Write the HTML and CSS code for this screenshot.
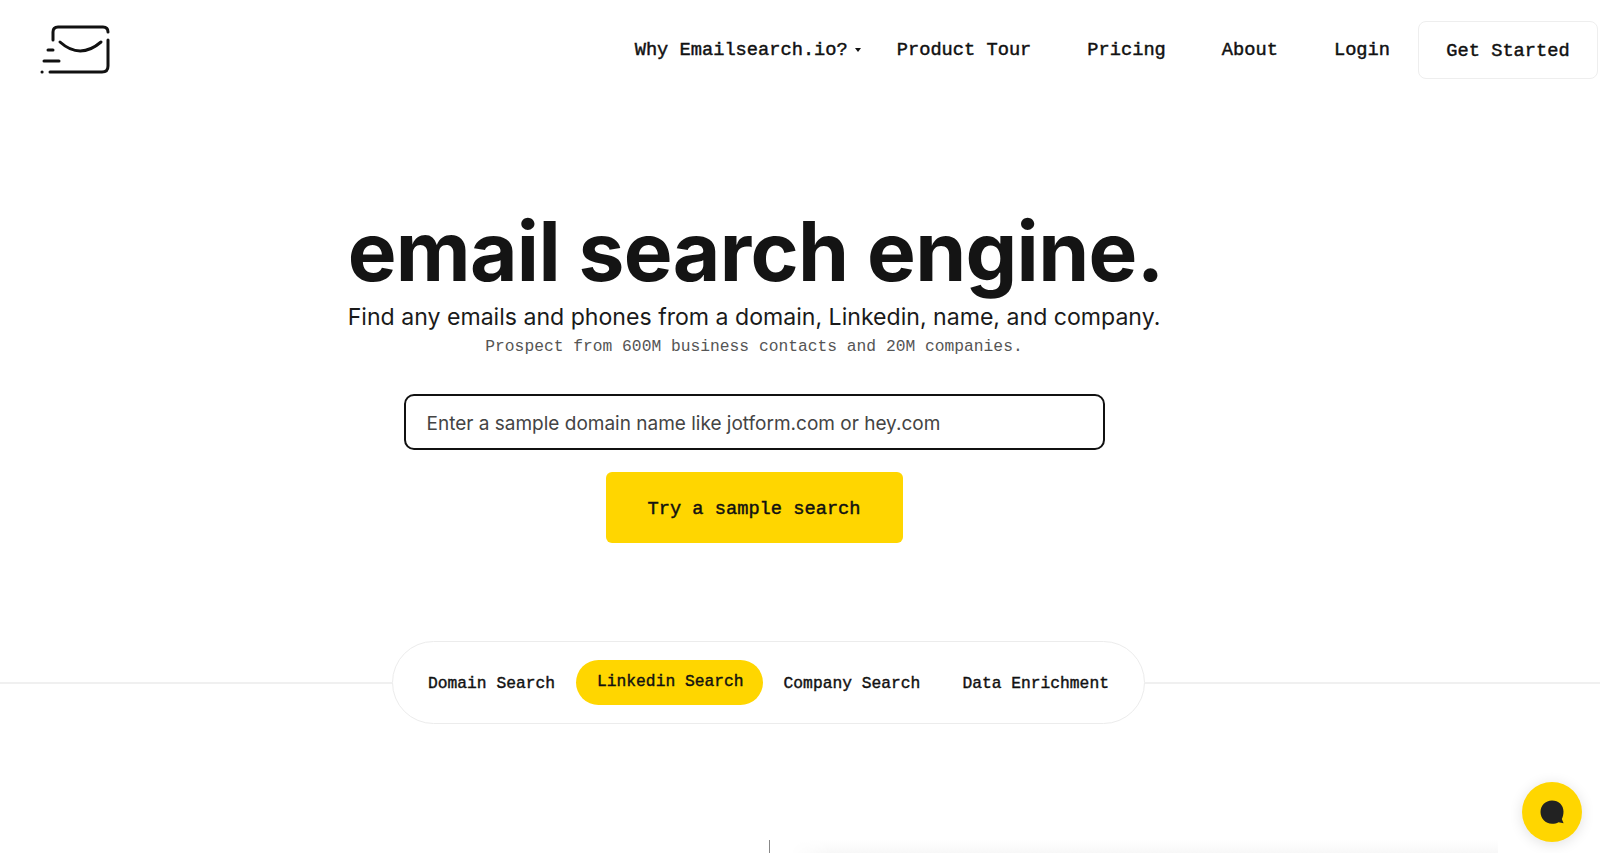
FILE: index.html
```html
<!DOCTYPE html>
<html lang="en">
<head>
    <meta charset="UTF-8">
    <meta name="viewport" content="width=device-width, initial-scale=1.0">
    <title>Emailsearch.io</title>
    <link rel="stylesheet" href="styles.css">
</head>
<body>
    <header class="topbar">
        <a class="logo" href="#">
            <svg width="72" height="52" viewBox="20 14 72 52" fill="none" stroke="#111" stroke-width="3" stroke-linecap="round">
                <path d="M33 30V22Q33 17 38 17H83Q88 17 88 22"/>
                <path d="M88 30V56Q88 62 82 62H30"/>
                <path d="M40 32Q60 50 81 32"/>
                <path d="M28 40H33"/>
                <path d="M24 51H39"/>
                <path d="M22 62H22.1"/>
            </svg>
        </a>
        <nav class="menu">
            <a class="menu-link menu-drop" href="#">Why Emailsearch.io?<span class="caret"></span></a>
            <a class="menu-link" href="#">Product Tour</a>
            <a class="menu-link" href="#">Pricing</a>
            <a class="menu-link" href="#">About</a>
            <a class="menu-link" href="#">Login</a>
            <a class="menu-cta" href="#">Get Started</a>
        </nav>
    </header>

    <section class="hero">
        <h1>email search engine.</h1>
        <p class="lead">Find any emails and phones from a domain, Linkedin, name, and company.</p>
        <p class="sublead">Prospect from 600M business contacts and 20M companies.</p>
        <input class="domain-input" type="text" placeholder="Enter a sample domain name like jotform.com or hey.com">
        <button class="try-btn">Try a sample search</button>
    </section>

    <section class="tabs-row">
        <span class="rule"></span>
        <div class="tabs">
            <a class="tab" href="#">Domain Search</a>
            <a class="tab active" href="#">Linkedin Search</a>
            <a class="tab" href="#">Company Search</a>
            <a class="tab" href="#">Data Enrichment</a>
        </div>
        <span class="rule"></span>
    </section>

    <section class="preview">
        <div class="preview-panel"></div>
    </section>

    <button class="chat" aria-label="Chat">
        <svg width="26" height="26" viewBox="0 0 26 26" fill="#222">
            <path d="M13 1.500C19.500 1.500 24.500 6 24.500 12.500C24.500 15.500 23.800 18 22.800 20L24.600 24.200L19.500 23.200C17.800 24.200 15.500 24.700 13 24.700C6.500 24.700 1.500 19.500 1.500 13C1.500 6.500 6.500 1.500 13 1.500Z"/>
        </svg>
    </button>
</body>
</html>
```

FILE: styles.css
```css
html, body {
    margin: 0;
    padding: 0;
    background: #fff;
    color: #111;
    overflow: hidden;
    height: 853px;
}

a {
    color: inherit;
    text-decoration: none;
}

.topbar {
    display: flex;
    align-items: center;
    justify-content: space-between;
    height: 100px;
    padding: 0 2px 0 40px;
}

.logo {
    display: flex;
}

.menu {
    display: flex;
    align-items: center;
}

.menu-link {
    padding: 0 28px;
    font-family: "Liberation Mono", monospace;
    font-size: 18.7px;
    -webkit-text-stroke: 0.45px #111;
}

.menu-drop {
    display: flex;
    align-items: center;
    padding-right: 8px;
}

.caret {
    margin-left: 7px;
    border-left: 3.500px solid transparent;
    border-right: 3.500px solid transparent;
    border-top: 4px solid #111;
}

.menu-cta {
    display: flex;
    align-items: center;
    justify-content: center;
    width: 180px;
    height: 58px;
    box-sizing: border-box;
    padding-top: 1px;
    border: 1px solid #eee;
    border-radius: 8px;
    font-family: "Liberation Mono", monospace;
    font-size: 18.7px;
    -webkit-text-stroke: 0.45px #111;
}

.hero {
    display: flex;
    flex-direction: column;
    align-items: center;
    padding: 102px 92px 0 0;
}

.hero h1 {
    margin: 0 0 0 3px;
    font-family: "Inter", sans-serif;
    font-size: 82px;
    font-weight: 700;
    line-height: 100px;
    letter-spacing: -0.7px;
    color: #141414;
}

.lead {
    margin: -1px 0 0;
    font-family: "Inter", sans-serif;
    font-size: 23.1px;
    line-height: 32px;
    color: #1a1a1a;
}

.sublead {
    margin: 2px 0 0;
    font-family: "Liberation Mono", monospace;
    font-size: 16.300px;
    line-height: 24px;
    color: #555;
}

.domain-input {
    width: 701px;
    height: 56px;
    box-sizing: border-box;
    margin-top: 35px;
    padding: 2px 21px 0;
    border: 2px solid #111;
    border-radius: 10px;
    outline: none;
    font-family: "Inter", sans-serif;
    font-size: 19px;
}

.domain-input::placeholder {
    color: #444;
    opacity: 1;
}

.try-btn {
    width: 297px;
    height: 71px;
    margin-top: 22px;
    padding: 2px 0 0;
    border: none;
    border-radius: 6px;
    background: #ffd600;
    color: #111;
    font-family: "Liberation Mono", monospace;
    font-size: 18.7px;
    -webkit-text-stroke: 0.45px #111;
}

.tabs-row {
    display: grid;
    grid-template-columns: 392px auto 1fr;
    align-items: center;
    margin-top: 98px;
}

.rule {
    height: 2px;
    background: #f0f0f0;
}

.tabs {
    display: flex;
    align-items: center;
    width: 753px;
    height: 83px;
    box-sizing: border-box;
    padding: 0 14px;
    border: 1px solid #ececec;
    border-radius: 42px;
    background: #fff;
}

.tab {
    padding: 2px 21px 0;
    font-family: "Liberation Mono", monospace;
    font-size: 16.300px;
    -webkit-text-stroke: 0.4px #111;
}

.tab.active {
    display: flex;
    align-items: center;
    height: 45px;
    padding: 0 19px 3px 21px;
    box-sizing: border-box;
    border-radius: 23px;
    background: #ffd600;
}

.preview {
    display: flex;
    height: 14px;
    margin-top: 116px;
    padding-left: 769px;
    overflow: hidden;
}

.preview::before {
    content: "";
    width: 1px;
    background: #888;
}

/* top of the panel below the fold, only its soft edge shows */
.preview-panel {
    width: 708px;
    margin-left: 20px;
    background: linear-gradient(to bottom, #fff, #f7f7f7);
    -webkit-mask-image: linear-gradient(to right, transparent, #000 40px);
    mask-image: linear-gradient(to right, transparent, #000 40px);
}

.chat {
    position: fixed;
    right: 18px;
    bottom: 11px;
    display: flex;
    align-items: center;
    justify-content: center;
    width: 60px;
    height: 60px;
    padding: 0;
    border: none;
    border-radius: 50%;
    background: #ffd600;
    box-shadow: 0 2px 14px rgba(0, 0, 0, 0.12);
}
```
